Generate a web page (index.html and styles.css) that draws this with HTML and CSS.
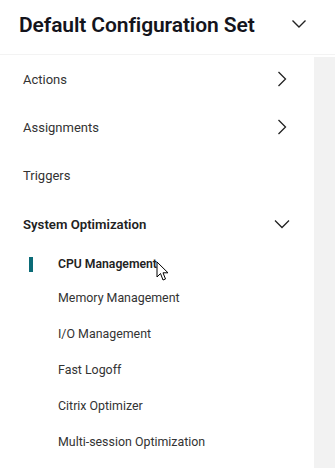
FILE: index.html
```html
<!DOCTYPE html>
<html>
<head>
<meta charset="utf-8">
<link rel="stylesheet" href="styles.css">
</head>
<body>
<div class="page">
  <header class="header">
    <h1 class="title">Default Configuration Set</h1>
    <svg class="hchev" width="16" height="10" viewBox="0 0 16 10"><path d="M1.5 1.5 L8 8 L14.5 1.5" fill="none" stroke="#222" stroke-width="1.4"/></svg>
  </header>
  <div class="body">
    <nav class="side">
      <div class="item"><span>Actions</span><svg class="rchev" width="10" height="16" viewBox="0 0 10 16"><path d="M1.5 1 L8.5 8 L1.5 15" fill="none" stroke="#222" stroke-width="1.3"/></svg></div>
      <div class="item"><span>Assignments</span><svg class="rchev" width="10" height="16" viewBox="0 0 10 16"><path d="M1.5 1 L8.5 8 L1.5 15" fill="none" stroke="#222" stroke-width="1.3"/></svg></div>
      <div class="item"><span>Triggers</span></div>
      <div class="item group"><span>System Optimization</span><svg class="dchev" width="16" height="10" viewBox="0 0 16 10"><path d="M1 1.5 L8 8.5 L15 1.5" fill="none" stroke="#222" stroke-width="1.3"/></svg></div>
      <div class="sub active"><span class="bar"></span><span class="label">CPU Management</span>
        <svg class="cursor" width="14" height="21" viewBox="0 0 14 21"><path d="M1 1 L1 16 L4.5 12.5 L7 19 L9.5 18 L7 11.8 L12 11.8 Z" fill="#fff" stroke="#000" stroke-width="1" stroke-linejoin="round"/></svg>
      </div>
      <div class="sub"><span class="label">Memory Management</span></div>
      <div class="sub"><span class="label">I/O Management</span></div>
      <div class="sub"><span class="label">Fast Logoff</span></div>
      <div class="sub"><span class="label">Citrix Optimizer</span></div>
      <div class="sub"><span class="label">Multi-session Optimization</span></div>
    </nav>
    <div class="main"></div>
  </div>
</div>
</body>
</html>
```
FILE: styles.css
```css
* { box-sizing: border-box; }
html, body { margin: 0; padding: 0; background: #fff; }
body { font-family: Roboto, "Liberation Sans", sans-serif; color: #2b2b2b; }
.page { width: 335px; height: 468px; display: flex; flex-direction: column; overflow: hidden; }
.header { height: 55px; display: flex; align-items: center; padding: 0 28px 0 19px; justify-content: space-between; border-bottom: 1px solid #f3f3f3; flex: none; }
.title { margin: 0; font-size: 21px; font-weight: 600; color: #14141c; letter-spacing: -0.1px; padding-bottom: 4px; }
.hchev { margin-top: -6px; }
.body { flex: 1; display: flex; }
.side { width: 314px; background: #fff; display: flex; flex-direction: column; }
.main { flex: 1; background: #f2f2f2; margin-top: 2px; }
.item { height: 48px; display: flex; align-items: center; justify-content: space-between; padding: 0 27px 0 23px; font-size: 13px; color: #333; flex: none; }
.item.group { font-weight: 600; color: #222; height: 50px; padding-right: 24px; font-size: 13.2px; }
.sub { height: 36px; display: flex; align-items: center; font-size: 12.4px; color: #333; position: relative; padding-left: 58px; flex: none; }
.sub.active { height: 30px; font-weight: 600; color: #222; font-size: 12.2px; }
.bar { position: absolute; left: 29px; top: 8px; width: 4px; height: 15px; background: #0b6b77; }
.cursor { position: absolute; left: 156px; top: 12px; }
```
